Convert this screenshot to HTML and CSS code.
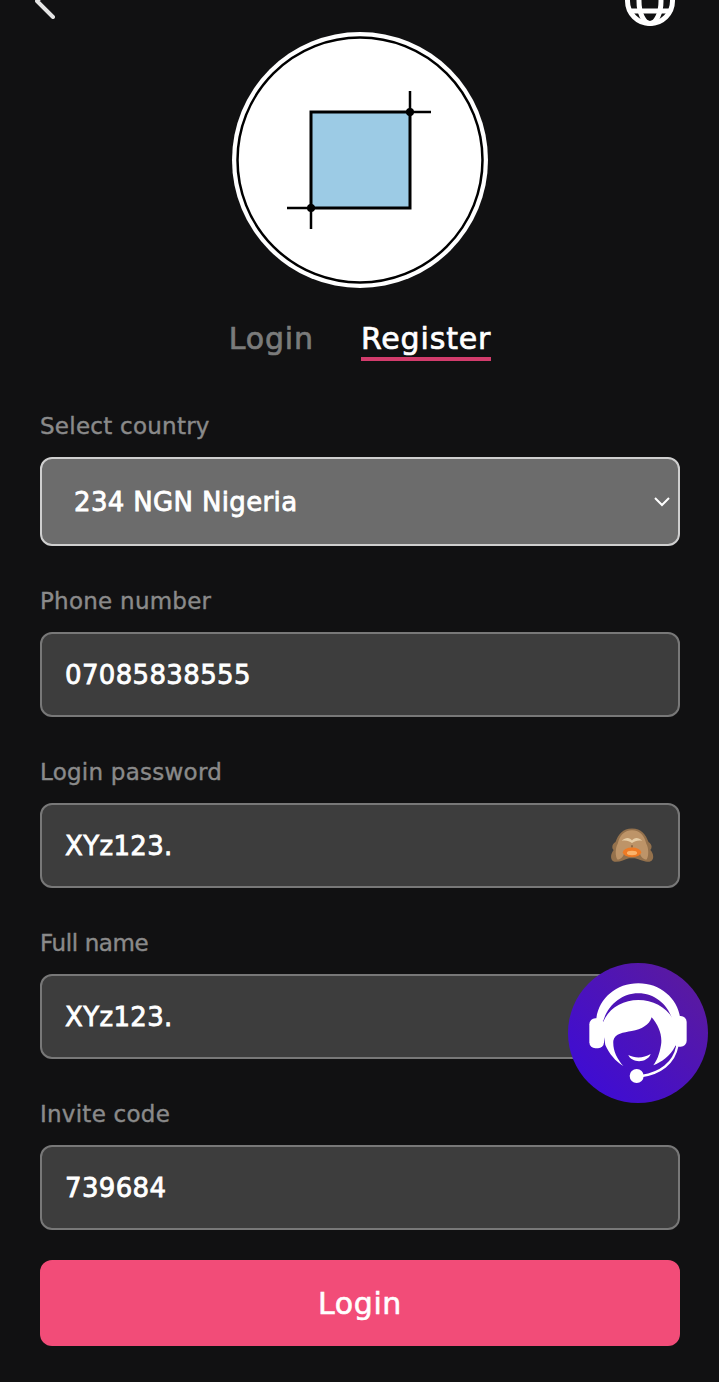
FILE: index.html
```html
<!DOCTYPE html>
<html lang="en">
<head>
<meta charset="utf-8">
<title>Register</title>
<link rel="stylesheet" href="styles.css">
</head>
<body>
<main class="page">
  <header class="topbar">
    <svg class="back" viewBox="0 0 20 40" aria-hidden="true"><path d="M18 6 L2 22 L18 38"/></svg>
    <svg class="globe" viewBox="0 0 50 50" aria-hidden="true">
      <circle cx="25" cy="25" r="22.5"/>
      <ellipse cx="25" cy="25" rx="11" ry="22.5"/>
      <path d="M4 35h42"/>
    </svg>
  </header>

  <div class="logo">
    <svg viewBox="0 0 256 256" aria-hidden="true">
      <circle cx="128" cy="128" r="128" fill="#fff"/>
      <circle cx="128" cy="128" r="122.5" fill="#fff" stroke="#000" stroke-width="2.5"/>
      <rect x="79" y="80" width="99" height="96" fill="#9ccbe5" stroke="#000" stroke-width="3"/>
      <path d="M178 59v25M174 80h25M79 197v-25M55 176h28" fill="none" stroke="#000" stroke-width="2.5"/>
      <circle cx="178" cy="80" r="4"/>
      <circle cx="79" cy="176" r="4"/>
    </svg>
  </div>

  <nav class="tabs">
    <a class="tab">Login</a>
    <a class="tab tab-active">Register</a>
  </nav>

  <form class="form">
    <div class="field">
      <label class="label">Select country</label>
      <div class="select-box">
        <span class="select-value">234 NGN Nigeria</span>
        <svg class="caret" viewBox="0 0 18 12" aria-hidden="true"><path d="M2 2l7 7 7-7"/></svg>
      </div>
    </div>
    <div class="field">
      <label class="label">Phone number</label>
      <div class="input-box"><span class="value">07085838555</span></div>
    </div>
    <div class="field">
      <label class="label">Login password</label>
      <div class="input-box">
        <span class="value">XYz123.</span>
        <svg class="monkey" viewBox="70 45 120 95" aria-label="see-no-evil monkey">
          <path fill="#94714c" d="M130 46C105 46 92 63 85 83C75 88 74 100 80 105C68 120 72 137 86 137C100 137 110 130 122 127H138C150 130 165 137 175 137C190 137 192 118 180 105C186 98 184 88 175 83C168 63 155 46 130 46Z"/>
          <path fill="#bd9468" d="M130 51C108 51 96 66 91 88C84 100 84 122 90 131C102 130 108 120 109 110C118 102 142 102 151 110C152 120 158 130 170 131C176 122 176 100 169 88C164 66 152 51 130 51Z"/>
          <path fill="#e6cda6" d="M102 80C114 68 125 72 130 79C135 72 146 68 158 80C146 77 138 81 130 86C122 81 114 77 102 80Z"/>
          <path fill="none" stroke="#6b4a2c" stroke-width="3" d="M130 92v6"/>
          <ellipse cx="130" cy="111" rx="25" ry="13" fill="#ef7a24"/>
          <ellipse cx="130" cy="113" rx="14" ry="6" fill="#fbb36a"/>
        </svg>
      </div>
    </div>
    <div class="field">
      <label class="label label-tight">Full name</label>
      <div class="input-box"><span class="value">XYz123.</span></div>
    </div>
    <div class="field field-last">
      <label class="label">Invite code</label>
      <div class="input-box"><span class="value">739684</span></div>
    </div>
    <button class="submit" type="button">Login</button>
  </form>

  <a class="support" aria-label="Customer support">
    <svg viewBox="24 39 420 420" aria-hidden="true">
      <g fill="#fff">
        <path d="M108 215C112 150 165 100 235 100C305 100 358 150 362 215L338 212C325 165 285 130 235 130C185 130 145 165 130 212Z"/>
        <path d="M126 226C140 178 185 150 235 150C285 150 330 178 346 222L346 288C330 320 305 335 280 346C290 332 298 315 303 285C308 255 295 225 275 202C268 225 245 238 215 243C190 248 165 250 160 272C158 300 170 325 190 348C165 332 148 312 136 285Z"/>
        <rect x="88" y="205" width="44" height="90" rx="18"/>
        <rect x="338" y="198" width="42" height="92" rx="18"/>
        <path d="M205 315C225 325 250 325 272 312C262 340 215 340 205 315Z"/>
      </g>
      <path fill="none" stroke="#fff" stroke-width="7" d="M352 288C342 340 300 370 245 378"/>
      <circle cx="230" cy="378" r="21" fill="#fff"/>
    </svg>
  </a>
</main>
</body>
</html>
```
FILE: styles.css
```css
* { box-sizing: border-box; }
html, body { margin: 0; height: 100%; }
body {
  background: #111112;
  color: #fff;
  font-family: "DejaVu Sans", sans-serif;
  overflow: hidden;
}
.page {
  position: relative;
  width: 719px;
  height: 1382px;
  padding: 0 39px 0 40px;
  overflow: hidden;
}
.topbar {
  display: flex;
  justify-content: space-between;
  align-items: flex-start;
  height: 57px;
  margin: -25px 5px 0 -6px;
}
.back { width: 20px; height: 40px; margin-top: 4px; margin-left: 1px; }
.back path { fill: none; stroke: #e4e4e4; stroke-width: 4; stroke-linecap: round; stroke-linejoin: round; }
.globe { width: 50px; height: 50px; margin-top: 1px; }
.globe circle, .globe ellipse, .globe path { fill: none; stroke: #fff; stroke-width: 5; }
.logo { display: flex; justify-content: center; height: 256px; }
.logo svg { width: 256px; height: 256px; display: block; }
.tabs {
  display: flex;
  justify-content: center;
  gap: 47px;
  margin-top: 31px;
  height: 42px;
}
.tab {
  font-size: 30px;
  line-height: 40px;
  height: 42px;
  color: #7b7b7b;
  letter-spacing: 0.85px;
  -webkit-text-stroke: 0.7px currentColor;
}
.tab-active { color: #fff; border-bottom: 4px solid #d23c6c; }
.form { display: flex; flex-direction: column; margin-top: 50px; }
.field { display: flex; flex-direction: column; margin-bottom: 40px; }
.field-last { margin-bottom: 30px; }
.label {
  font-size: 23px;
  line-height: 30px;
  height: 30px;
  margin-bottom: 16px;
  color: #8a8a8a;
  letter-spacing: 0.25px;
  -webkit-text-stroke: 0.4px currentColor;
}
.label-tight { letter-spacing: -0.4px; }
.select-box, .input-box {
  display: flex;
  align-items: center;
  justify-content: space-between;
  width: 640px;
  border-radius: 12px;
  border: 2px solid #787878;
  background: #3d3d3d;
  height: 85px;
  padding: 0 24px 0 23px;
}
.select-box {
  height: 89px;
  background: #6c6c6c;
  border-color: #cfcfcf;
  padding: 0 7px 0 32px;
}
.select-value, .value {
  font-size: 26px;
  color: #fff;
  -webkit-text-stroke: 0.8px #fff;
  letter-spacing: 0.35px;
}
.caret { width: 18px; height: 12px; }
.caret path { fill: none; stroke: #fff; stroke-width: 2; }
.monkey { width: 44px; height: 35px; }
.submit {
  width: 640px;
  height: 86px;
  border: 0;
  border-radius: 12px;
  background: #f24c78;
  color: #fff;
  font: inherit;
  font-size: 30px;
  letter-spacing: 0.6px;
  -webkit-text-stroke: 0.6px #fff;
}
.support {
  position: absolute;
  left: 568px;
  top: 963px;
  width: 140px;
  height: 140px;
  border-radius: 50%;
  background: linear-gradient(45deg, #3a0adc, #5e1c98);
}
.support svg { display: block; width: 140px; height: 140px; }
```
